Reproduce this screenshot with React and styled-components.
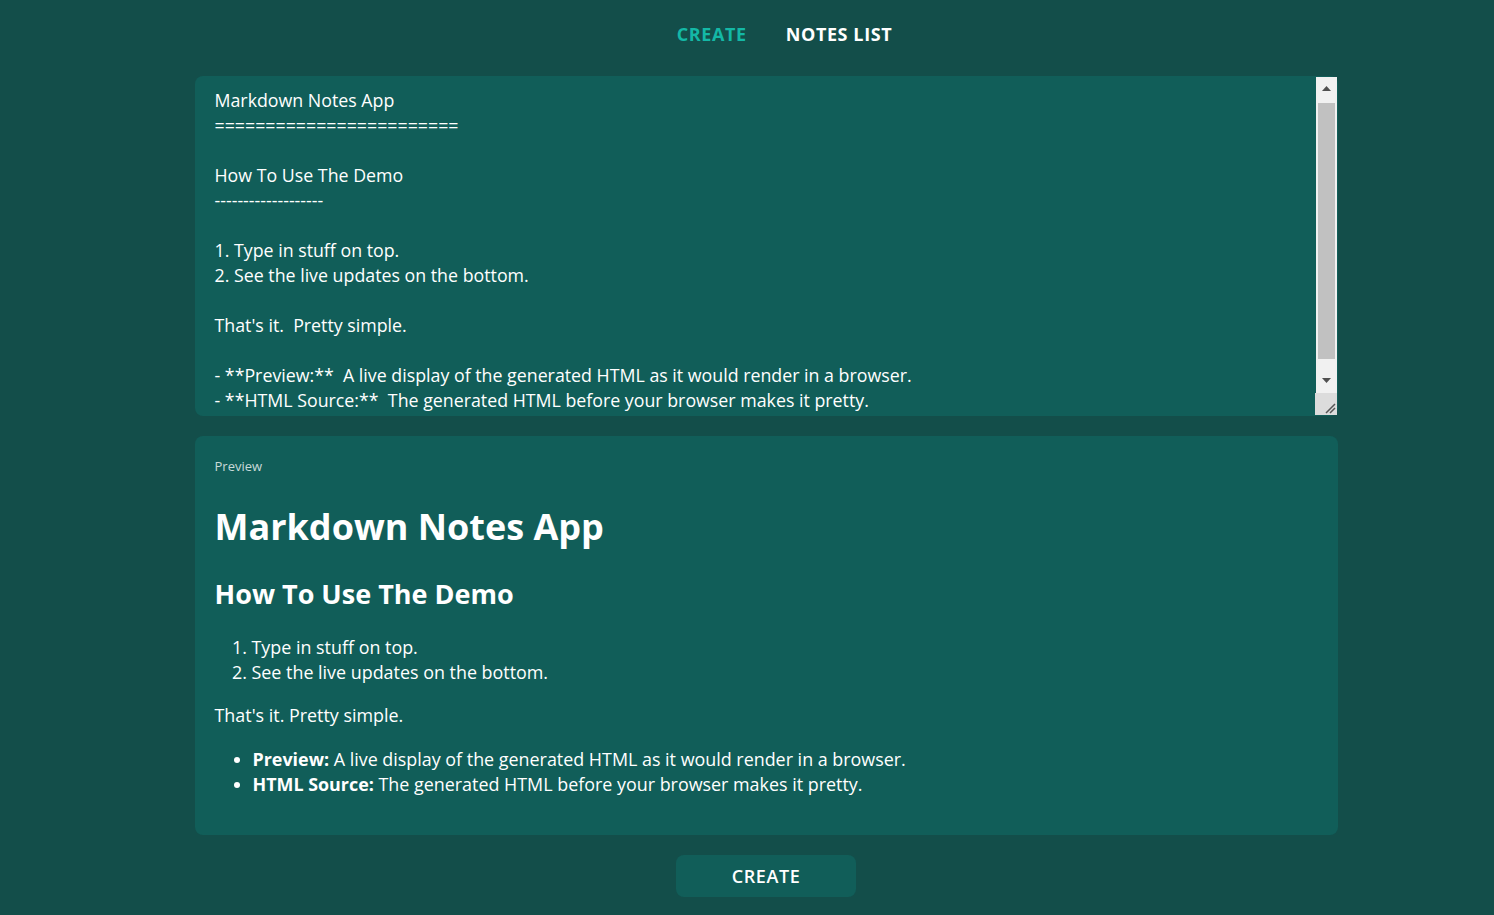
import React, { useState } from "react";
import styled, { createGlobalStyle } from "styled-components";

const GlobalStyle = createGlobalStyle`
  html, body { margin: 0; padding: 0; }
  body {
    background: #134e4a;
    font-family: "Open Sans", "Noto Sans", sans-serif;
    color: #ffffff;
  }
`;

const Page = styled.div`
  min-height: 915px;
  box-sizing: border-box;
  padding-left: 38px;
  display: flex;
  flex-direction: column;
  align-items: center;
`;

const Nav = styled.ul`
  list-style: none;
  margin: 0;
  padding: 22px 0 22px 37px;
  display: flex;
  gap: 39px;
  justify-content: center;
`;

const NavLink = styled.li`
  font-size: 18px;
  line-height: 24px;
  font-weight: 700;
  letter-spacing: 0.6px;
  color: ${(p) => (p.$active ? "#14b8a6" : "#ffffff")};
  cursor: pointer;
`;

const Main = styled.div`
  width: 1143px;
  margin-top: 8px;
  display: flex;
  flex-direction: column;
  align-items: center;
`;

const EditorWrap = styled.div`
  position: relative;
  width: 100%;
  height: 340px;
`;

const Editor = styled.textarea`
  width: 100%;
  height: 100%;
  box-sizing: border-box;
  padding: 12px 42px 0 20px;
  border: none;
  border-radius: 8px;
  background: #115e59;
  color: #ffffff;
  font-family: "Open Sans", "Noto Sans", sans-serif;
  font-size: 17.8px;
  line-height: 25px;
  outline: none;
  display: block;
  resize: none;
  overflow: hidden;
`;

const ScrollTrack = styled.div`
  position: absolute;
  top: 1px;
  right: 1px;
  width: 21px;
  height: 316px;
  background: #f1f1f1;
  display: flex;
  flex-direction: column;
  align-items: center;
`;

const ArrowBox = styled.div`
  height: ${(p) => p.$h}px;
  width: 100%;
  display: flex;
  align-items: ${(p) => (p.$down ? "flex-start" : "flex-start")};
  justify-content: center;
  padding-top: ${(p) => p.$pt}px;
  box-sizing: border-box;
  flex: none;
`;

const Thumb = styled.div`
  width: 17px;
  height: 256px;
  background: #c1c1c1;
  flex: none;
`;

const Corner = styled.div`
  position: absolute;
  right: 1px;
  bottom: 1px;
  width: 22px;
  height: 22px;
  background: #dcdcdc;
  display: flex;
  align-items: flex-end;
  justify-content: flex-end;
`;

const Card = styled.section`
  width: 100%;
  box-sizing: border-box;
  margin-top: 20px;
  padding: 20px;
  border-radius: 8px;
  background: #115e59;
`;

const Label = styled.div`
  font-size: 13px;
  line-height: 20px;
  color: rgba(255, 255, 255, 0.78);
`;

const H1 = styled.h1`
  margin: 29px 0 0;
  font-size: 36px;
  line-height: 43px;
  font-weight: 700;
`;

const H2 = styled.h2`
  margin: 29px 0 0;
  font-size: 27px;
  line-height: 34px;
  font-weight: 700;
`;

const Text = styled.p`
  margin: 18px 0 0;
  font-size: 17.9px;
  line-height: 25px;
`;

const List = styled.ul`
  margin: 19px 0 18px;
  padding-left: 38px;
  font-size: 17.9px;
  line-height: 25px;
`;

const Ordered = styled.ol`
  margin: 24px 0 0;
  padding-left: 37px;
  font-size: 17.9px;
  line-height: 25px;
`;

const Button = styled.button`
  margin-top: 20px;
  width: 180px;
  height: 42px;
  border: none;
  border-radius: 8px;
  background: #115e59;
  color: #ffffff;
  font-family: "Open Sans", "Noto Sans", sans-serif;
  font-size: 18px;
  font-weight: 600;
  letter-spacing: 0.6px;
  cursor: pointer;
`;

const initial = `Markdown Notes App
========================

How To Use The Demo
-------------------

1. Type in stuff on top.
2. See the live updates on the bottom.

That's it.  Pretty simple.

- **Preview:**  A live display of the generated HTML as it would render in a browser.
- **HTML Source:**  The generated HTML before your browser makes it pretty.
`;

export default function App() {
  const [text, setText] = useState(initial);
  return (
    <>
      <GlobalStyle />
      <Page>
        <Nav>
          <NavLink $active>CREATE</NavLink>
          <NavLink>NOTES LIST</NavLink>
        </Nav>
        <Main>
          <EditorWrap>
            <Editor value={text} onChange={(e) => setText(e.target.value)} />
            <ScrollTrack aria-hidden="true">
              <ArrowBox $h={26} $pt={9}>
                <svg width="9" height="5" viewBox="0 0 9 5">
                  <path d="M0 5 L4.5 0 L9 5 Z" fill="#505050" />
                </svg>
              </ArrowBox>
              <Thumb />
              <ArrowBox $h={34} $pt={19} $down>
                <svg width="9" height="5" viewBox="0 0 9 5">
                  <path d="M0 0 L4.5 5 L9 0 Z" fill="#505050" />
                </svg>
              </ArrowBox>
            </ScrollTrack>
            <Corner aria-hidden="true">
              <svg width="14" height="14" viewBox="0 0 14 14">
                <path d="M3 12 L12 3 M7 12 L12 7" stroke="#555" strokeWidth="1.5" fill="none" />
              </svg>
            </Corner>
          </EditorWrap>
          <Card>
            <Label>Preview</Label>
            <H1>Markdown Notes App</H1>
            <H2>How To Use The Demo</H2>
            <Ordered>
              <li>Type in stuff on top.</li>
              <li>See the live updates on the bottom.</li>
            </Ordered>
            <Text>That's it. Pretty simple.</Text>
            <List>
              <li>
                <strong>Preview:</strong> A live display of the generated HTML as it would render in a browser.
              </li>
              <li>
                <strong>HTML Source:</strong> The generated HTML before your browser makes it pretty.
              </li>
            </List>
          </Card>
          <Button>CREATE</Button>
        </Main>
      </Page>
    </>
  );
}
